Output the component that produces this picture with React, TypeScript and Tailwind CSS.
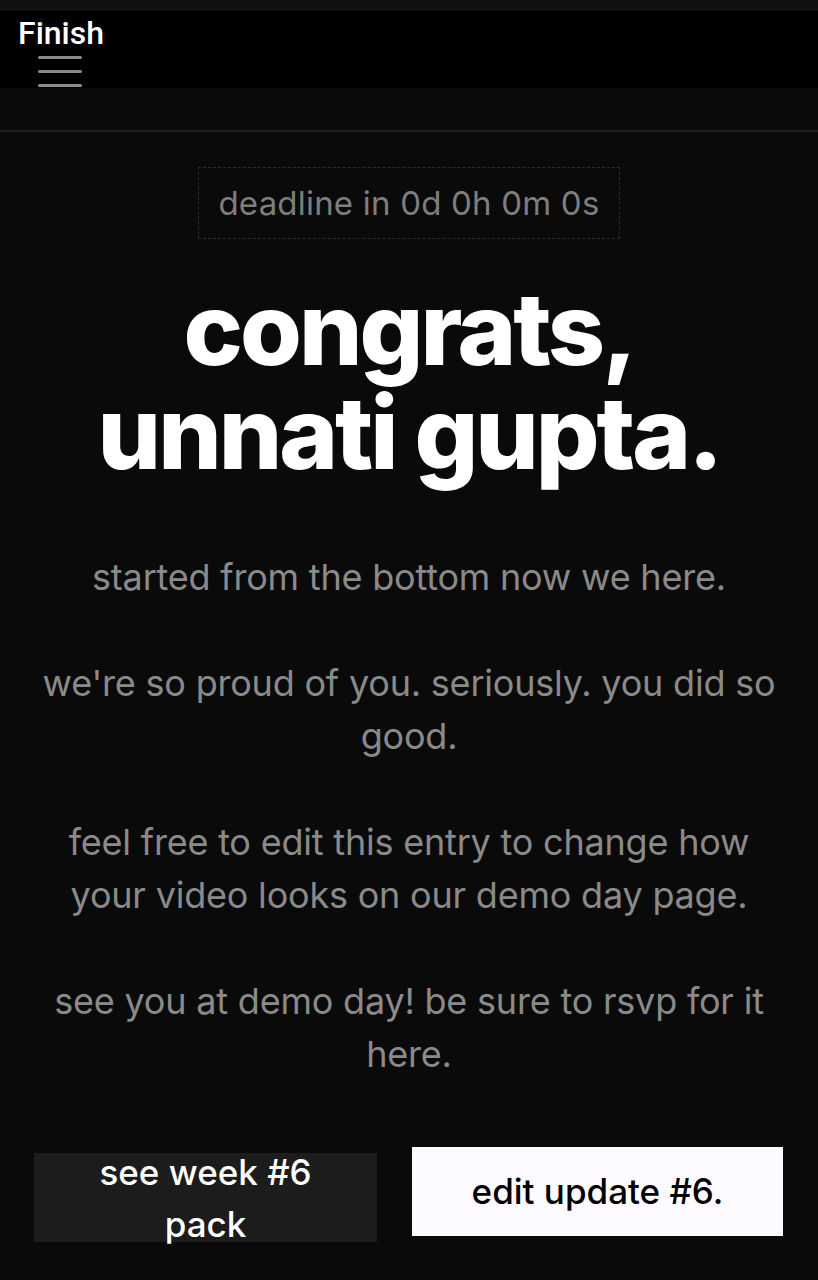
import React from "react";

const paragraphs = [
  "started from the bottom now we here.",
  "we're so proud of you. seriously. you did so good.",
  "feel free to edit this entry to change how your video looks on our demo day page.",
  "see you at demo day! be sure to rsvp for it here.",
];

const App: React.FC = () => {
  return (
    <div className="min-h-[1280px] bg-[#0a0a0a] font-['Inter',sans-serif]">
      {/* top strip */}
      <div className="h-[11px] bg-[#111111]" />
      <header className="h-[77px] bg-black px-[18px] pt-[6px]">
        <div className="text-[32px] leading-[32px] font-medium text-white font-['Roboto',sans-serif]">
          Finish
        </div>
        <div className="ml-[20px] mt-[7px] flex w-[44px] flex-col gap-[11px]">
          <span className="h-[3px] rounded-full bg-[#8a8a8a]" />
          <span className="h-[3px] rounded-full bg-[#8a8a8a]" />
          <span className="h-[3px] rounded-full bg-[#8a8a8a]" />
        </div>
      </header>
      <div className="h-[44px] border-b-2 border-[#1f1f1f] bg-[#0b0b0b]" />

      <main className="flex flex-col items-center px-[30px] pt-[35px]">
        <div className="border border-dashed border-[#2c2c2c] px-[19px] py-[13px] text-[33px] leading-[44px] tracking-[0.2px] text-[#7e7e7e]">
          deadline in 0d 0h 0m 0s
        </div>

        <h1 className="mt-[38px] text-center text-[100px] leading-[104px] font-extrabold tracking-[-3px] text-white">
          congrats,
          <br />
          unnati gupta.
        </h1>

        <div className="mt-[66px] flex max-w-[758px] flex-col gap-[53px] text-center text-[36px] leading-[53px] tracking-[-0.2px] text-[#8a8a8a]">
          {paragraphs.map((p) => (
            <p key={p}>{p}</p>
          ))}
        </div>

        <div className="mt-[66px] flex w-full items-start gap-[35px] pl-[4px]">
          <button className="mt-[6px] flex h-[89px] w-[343px] shrink-0 flex-col items-center justify-center bg-[#1c1c1c] px-[55px] text-[35px] leading-[52px] font-medium text-white">
            see week #6 pack
          </button>
          <button className="h-[89px] w-[371px] shrink-0 bg-[#fdfbff] text-[35px] font-medium text-black">
            edit update #6.
          </button>
        </div>
      </main>
    </div>
  );
};

export default App;
